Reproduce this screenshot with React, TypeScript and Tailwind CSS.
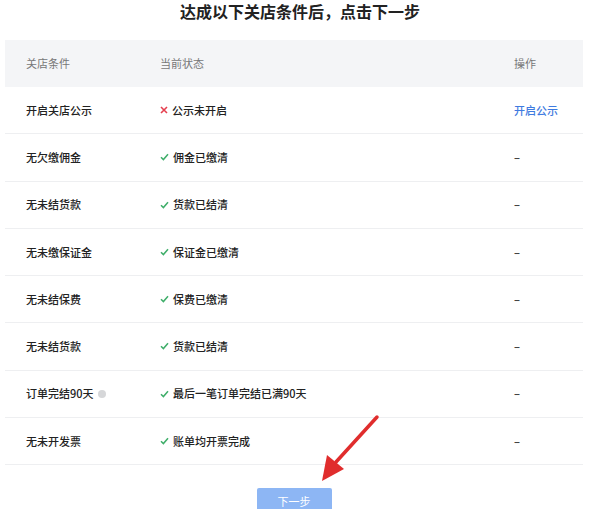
import React from 'react'

const rows = [
  { name: '开启关店公示', ok: false, status: '公示未开启', action: '开启公示' },
  { name: '无欠缴佣金', ok: true, status: '佣金已缴清' },
  { name: '无未结货款', ok: true, status: '货款已结清' },
  { name: '无未缴保证金', ok: true, status: '保证金已缴清' },
  { name: '无未结保费', ok: true, status: '保费已缴清' },
  { name: '无未结货款', ok: true, status: '货款已结清' },
  { name: '订单完结90天', ok: true, status: '最后一笔订单完结已满90天', info: true },
  { name: '无未开发票', ok: true, status: '账单均开票完成' },
]

function Check() {
  return (
    <svg width="9" height="8" viewBox="0 0 9 8" className="shrink-0">
      <path d="M1 4.2 L3.4 6.6 L8 1.2" fill="none" stroke="#3fae6a" strokeWidth="1.5" />
    </svg>
  )
}

function Cross() {
  return (
    <svg width="8" height="8" viewBox="0 0 8 8" className="shrink-0">
      <path d="M1 1 L7 7 M7 1 L1 7" fill="none" stroke="#e5404f" strokeWidth="1.6" />
    </svg>
  )
}

export default function App() {
  return (
    <div
      className="relative w-[600px] h-[509px] overflow-hidden bg-white text-[#333]"
      style={{ fontFamily: '"Noto Sans CJK SC", "Noto Sans", sans-serif' }}
    >
      <h1 className="pt-[1px] text-center text-[16px] leading-[20px] font-bold text-[#222]">
        达成以下关店条件后，点击下一步
      </h1>

      <div className="mt-[19px] ml-[5px] w-[578px]">
        <div className="flex items-center h-[47px] bg-[#f4f5f7] text-[11px] text-[#777]">
          <div className="w-[155px] pl-[21px]">关店条件</div>
          <div className="flex-1">当前状态</div>
          <div className="w-[69px]">操作</div>
        </div>

        {rows.map((r, i) => (
          <div key={i} className="flex items-center h-[47.25px] border-b border-[#eeeff1] text-[11px]">
            <div className="w-[155px] pl-[21px] flex items-center gap-[4px] text-[#222] font-medium">
              <span>{r.name}</span>
              {r.info && <span className="w-[8px] h-[8px] rounded-full bg-[#d6d7d9]" />}
            </div>
            <div className="flex-1 flex items-center gap-[4px] text-[#222] font-medium">
              {r.ok ? <Check /> : <Cross />}
              <span>{r.status}</span>
            </div>
            <div className="w-[69px]">
              {r.action ? (
                <span className="text-[#3f7be0] font-medium">{r.action}</span>
              ) : (
                <span className="text-[#444] font-bold">–</span>
              )}
            </div>
          </div>
        ))}
      </div>

      <div className="flex justify-center mt-[23px]">
        <button className="w-[75px] h-[26px] ml-[-12px] rounded-[2px] bg-[#8db6f4] text-white text-[11px]">
          下一步
        </button>
      </div>

      <svg className="absolute left-0 top-0" width="600" height="509" viewBox="0 0 600 509">
        <path d="M377 417 L336 462" stroke="#e02d2d" strokeWidth="3.5" strokeLinecap="round" />
        <path d="M322 481 L327 455 L344 469 Z" fill="#e02d2d" />
      </svg>
    </div>
  )
}
